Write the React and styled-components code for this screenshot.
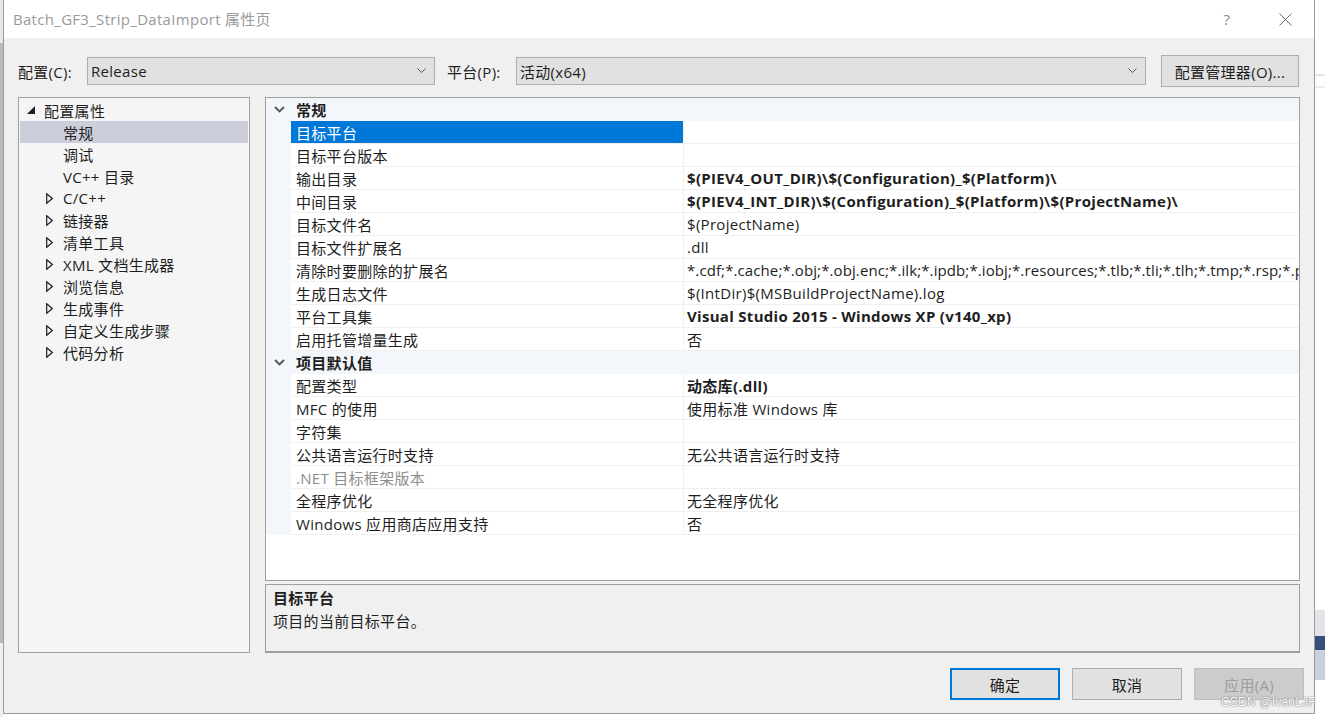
import React from "react";
import styled, { createGlobalStyle } from "styled-components";

const GlobalStyle = createGlobalStyle`
  html, body { margin: 0; padding: 0; background: #ffffff; overflow: hidden; }
  * { box-sizing: border-box; }
`;

const FONT = `"Segoe UI", "Open Sans", "Noto Sans CJK SC", sans-serif`;

const Screen = styled.div`
  width: 1325px;
  height: 717px;
  display: flex;
  font-family: ${FONT};
  font-size: 15px;
  letter-spacing: 0.3px;
  color: #1e1e1e;
  position: relative;
  background: #ffffff;
  overflow: hidden;
`;

const LeftEdge = styled.div`
  width: 3px;
  flex-shrink: 0;
  display: flex;
  flex-direction: column;
  background: #e8e8ec;
`;

const EdgeBand = styled.div`
  height: ${(p) => p.h}px;
  background: ${(p) => p.c};
  flex-shrink: 0;
`;

const RightEdge = styled.div`
  width: 10px;
  flex-shrink: 0;
  display: flex;
  flex-direction: column;
  background: #ffffff;
`;

const Dialog = styled.div`
  width: 1312px;
  flex-shrink: 0;
  height: 714px;
  border: 1px solid #9c9c9c;
  border-top: none;
  display: flex;
  flex-direction: column;
  background: #f0f0f0;
  min-width: 0;
`;

const TitleBar = styled.div`
  height: 38px;
  background: #ffffff;
  display: flex;
  align-items: center;
  padding-left: 9px;
  flex-shrink: 0;
`;

const Title = styled.div`
  flex: 1;
  color: #9a9a9a;
  font-size: 15px;
  padding-bottom: 2px;
`;

const TitleButton = styled.div`
  width: 58px;
  height: 38px;
  display: flex;
  align-items: center;
  justify-content: center;
  color: #8a8a8a;
  font-size: 15px;
`;

const Body = styled.div`
  flex: 1;
  display: flex;
  flex-direction: column;
  padding: 17px 15px 0 14px;
  min-width: 0;
`;

const Toolbar = styled.div`
  display: flex;
  align-items: center;
  height: 32px;
`;

const Label = styled.div`
  width: ${(p) => p.w}px;
  flex-shrink: 0;
  font-size: 15px;
  color: #1e1e1e;
`;

const Select = styled.div`
  width: ${(p) => p.w}px;
  height: 28px;
  flex-shrink: 0;
  background: #e1e1e1;
  border: 1px solid #adadad;
  display: flex;
  align-items: center;
  justify-content: space-between;
  padding: 0 8px 0 3px;
  font-size: 15px;
`;

const Button = styled.div`
  width: ${(p) => p.w || 110}px;
  height: 32px;
  flex-shrink: 0;
  display: flex;
  align-items: center;
  justify-content: center;
  font-size: 15px;
  background: ${(p) => (p.disabled ? "#cccccc" : "#e1e1e1")};
  color: ${(p) => (p.disabled ? "#9d9d9d" : "#1e1e1e")};
  border: ${(p) =>
    p.primary ? "2px solid #0078d7" : p.disabled ? "1px solid #bfbfbf" : "1px solid #adadad"};
`;

const Main = styled.div`
  display: flex;
  gap: 15px;
  margin-top: 10px;
  height: 556px;
`;

const Tree = styled.div`
  width: 232px;
  flex-shrink: 0;
  background: #f5f5f5;
  border: 1px solid #a0a0a0;
  padding: 1px;
  display: flex;
  flex-direction: column;
`;

const TreeRow = styled.div`
  height: 22px;
  display: flex;
  align-items: center;
  padding-left: ${(p) => p.indent}px;
  background: ${(p) => (p.selected ? "#cccedb" : "transparent")};
  font-size: 15px;
  white-space: nowrap;
`;

const Expander = styled.span`
  width: ${(p) => p.w}px;
  display: inline-flex;
  align-items: center;
  flex-shrink: 0;
`;

const RightCol = styled.div`
  width: 1035px;
  min-width: 0;
  flex-shrink: 0;
  display: flex;
  flex-direction: column;
  gap: 3px;
`;

const Grid = styled.div`
  height: 485px;
  border: 1px solid #a0a0a0;
  background: #ffffff;
  display: flex;
  flex-direction: column;
  overflow: hidden;
`;

const SectionRow = styled.div`
  height: 23px;
  flex-shrink: 0;
  display: flex;
  align-items: center;
  background: #f3f6fa;
  font-weight: 700;
  font-size: 15px;
`;

const SectionTitle = styled.span`
  padding-left: 5px;
`;

const Chevron = styled.span`
  width: 25px;
  display: inline-flex;
  justify-content: center;
  padding-left: 2px;
`;

const PropRow = styled.div`
  height: 23px;
  flex-shrink: 0;
  display: flex;
  min-width: 0;
`;

const Gutter = styled.div`
  width: 25px;
  flex-shrink: 0;
  background: #f3f6fa;
`;

const NameCell = styled.div`
  width: 392px;
  flex-shrink: 0;
  display: flex;
  align-items: center;
  padding-left: 5px;
  white-space: nowrap;
  border-bottom: 1px solid #f0f0f0;
  background: ${(p) => (p.selected ? "#0078d7" : "#ffffff")};
  color: ${(p) => (p.selected ? "#ffffff" : p.muted ? "#8d8d8d" : "#1e1e1e")};
`;

const ValueCell = styled.div`
  flex: 1;
  min-width: 0;
  display: flex;
  align-items: center;
  padding-left: 3px;
  white-space: nowrap;
  overflow: hidden;
  border-left: 1px solid #f0f0f0;
  border-bottom: 1px solid #f0f0f0;
  font-weight: ${(p) => (p.bold ? 700 : 400)};
  letter-spacing: ${(p) => (p.tight ? "0.1px" : "0.3px")};
`;

const Description = styled.div`
  height: 69px;
  background: #f0f0f0;
  border: 1px solid #a0a0a0;
  border-bottom: 2px solid #a0a0a0;
  padding: 3px 7px;
  display: flex;
  flex-direction: column;
  gap: 2px;
`;

const DescTitle = styled.div`
  font-weight: 700;
  font-size: 15px;
  line-height: 20px;
`;

const DescText = styled.div`
  font-size: 15px;
  line-height: 22px;
`;

const Footer = styled.div`
  display: flex;
  justify-content: flex-end;
  align-items: center;
  gap: 12px;
  padding-top: 15px;
  margin-right: -5px;
`;

const Watermark = styled.div`
  position: absolute;
  left: 1221px;
  top: 695px;
  font-family: "Liberation Sans", Arial, sans-serif;
  font-size: 12px;
  letter-spacing: 0.2px;
  color: #ffffff;
  text-shadow: 0 0 1px #666, 0 0 2px #888;
`;

const ChevronDown = ({ size = 9, color = "#555" }) => (
  <svg width={size} height={size / 2 + 1} viewBox="0 0 10 6">
    <polyline points="0.5,0.5 5,5 9.5,0.5" fill="none" stroke={color} strokeWidth="1.1" />
  </svg>
);

const BoldChevron = () => (
  <svg width="11" height="7" viewBox="0 0 11 7">
    <polyline points="1,1 5.5,5.5 10,1" fill="none" stroke="#555" strokeWidth="1.8" />
  </svg>
);

const FilledTri = () => (
  <svg width="8" height="8" viewBox="0 0 8 8">
    <polygon points="8,0 8,8 0,8" fill="#1e1e1e" />
  </svg>
);

const HollowTri = () => (
  <svg width="7" height="11" viewBox="0 0 7 11">
    <polygon points="0.7,0.7 6.3,5.5 0.7,10.3" fill="none" stroke="#1e1e1e" strokeWidth="1.2" />
  </svg>
);

const CloseX = () => (
  <svg width="13" height="13" viewBox="0 0 13 13">
    <path d="M0.5 0.5 L12.5 12.5 M12.5 0.5 L0.5 12.5" stroke="#6a6a6a" strokeWidth="1" />
  </svg>
);

const treeItems = [
  { label: "配置属性", level: 0, expanded: true },
  { label: "常规", level: 1, selected: true },
  { label: "调试", level: 1 },
  { label: "VC++ 目录", level: 1 },
  { label: "C/C++", level: 1, collapsed: true },
  { label: "链接器", level: 1, collapsed: true },
  { label: "清单工具", level: 1, collapsed: true },
  { label: "XML 文档生成器", level: 1, collapsed: true },
  { label: "浏览信息", level: 1, collapsed: true },
  { label: "生成事件", level: 1, collapsed: true },
  { label: "自定义生成步骤", level: 1, collapsed: true },
  { label: "代码分析", level: 1, collapsed: true },
];

const sections = [
  {
    title: "常规",
    rows: [
      { name: "目标平台", value: "", selected: true },
      { name: "目标平台版本", value: "" },
      { name: "输出目录", value: "$(PIEV4_OUT_DIR)\\$(Configuration)_$(Platform)\\", bold: true },
      { name: "中间目录", value: "$(PIEV4_INT_DIR)\\$(Configuration)_$(Platform)\\$(ProjectName)\\", bold: true },
      { name: "目标文件名", value: "$(ProjectName)" },
      { name: "目标文件扩展名", value: ".dll" },
      {
        name: "清除时要删除的扩展名",
        value: "*.cdf;*.cache;*.obj;*.obj.enc;*.ilk;*.ipdb;*.iobj;*.resources;*.tlb;*.tli;*.tlh;*.tmp;*.rsp;*.p",
        tight: true,
      },
      { name: "生成日志文件", value: "$(IntDir)$(MSBuildProjectName).log" },
      { name: "平台工具集", value: "Visual Studio 2015 - Windows XP (v140_xp)", bold: true },
      { name: "启用托管增量生成", value: "否" },
    ],
  },
  {
    title: "项目默认值",
    rows: [
      { name: "配置类型", value: "动态库(.dll)", bold: true },
      { name: "MFC 的使用", value: "使用标准 Windows 库" },
      { name: "字符集", value: "" },
      { name: "公共语言运行时支持", value: "无公共语言运行时支持" },
      { name: ".NET 目标框架版本", value: "", muted: true },
      { name: "全程序优化", value: "无全程序优化" },
      { name: "Windows 应用商店应用支持", value: "否" },
    ],
  },
];

export default function App() {
  return (
    <Screen>
      <GlobalStyle />
      <LeftEdge>
        <EdgeBand h={43} c="#e6e8ee" />
        <EdgeBand h={600} c="#b9b9c1" />
        <EdgeBand h={74} c="#eeeeee" />
      </LeftEdge>
      <Dialog>
        <TitleBar>
          <Title>Batch_GF3_Strip_DataImport 属性页</Title>
          <TitleButton>?</TitleButton>
          <TitleButton>
            <CloseX />
          </TitleButton>
        </TitleBar>
        <Body>
          <Toolbar>
            <Label w={69}>配置(C):</Label>
            <Select w={348}>
              <span>Release</span>
              <ChevronDown />
            </Select>
            <Label w={12} />
            <Label w={69}>平台(P):</Label>
            <Select w={630}>
              <span>活动(x64)</span>
              <ChevronDown />
            </Select>
            <Label w={15} />
            <Button w={138}>配置管理器(O)...</Button>
          </Toolbar>
          <Main>
            <Tree>
              {treeItems.map((t) => (
                <TreeRow key={t.label} indent={t.level === 0 ? 7 : 26} selected={t.selected}>
                  <Expander w={17}>
                    {t.expanded && <FilledTri />}
                    {t.collapsed && <HollowTri />}
                  </Expander>
                  <span>{t.label}</span>
                </TreeRow>
              ))}
            </Tree>
            <RightCol>
              <Grid>
                {sections.map((s) => (
                  <React.Fragment key={s.title}>
                    <SectionRow>
                      <Chevron>
                        <BoldChevron />
                      </Chevron>
                      <SectionTitle>{s.title}</SectionTitle>
                    </SectionRow>
                    {s.rows.map((r) => (
                      <PropRow key={r.name}>
                        <Gutter />
                        <NameCell selected={r.selected} muted={r.muted}>
                          {r.name}
                        </NameCell>
                        <ValueCell bold={r.bold} tight={r.tight}>
                          {r.value}
                        </ValueCell>
                      </PropRow>
                    ))}
                  </React.Fragment>
                ))}
              </Grid>
              <Description>
                <DescTitle>目标平台</DescTitle>
                <DescText>项目的当前目标平台。</DescText>
              </Description>
            </RightCol>
          </Main>
          <Footer>
            <Button primary>确定</Button>
            <Button>取消</Button>
            <Button disabled>应用(A)</Button>
          </Footer>
        </Body>
      </Dialog>
      <RightEdge>
        <EdgeBand h={74} c="#ffffff" />
        <EdgeBand h={2} c="#e2e2e2" />
        <EdgeBand h={10} c="#ffffff" />
        <EdgeBand h={2} c="#ececec" />
        <EdgeBand h={522} c="#ffffff" />
        <EdgeBand h={26} c="#e4e4e8" />
        <EdgeBand h={14} c="#34507a" />
        <EdgeBand h={30} c="#c9d0df" />
        <EdgeBand h={37} c="#ffffff" />
      </RightEdge>
      <Watermark>CSDN @IvanLJF</Watermark>
    </Screen>
  );
}
